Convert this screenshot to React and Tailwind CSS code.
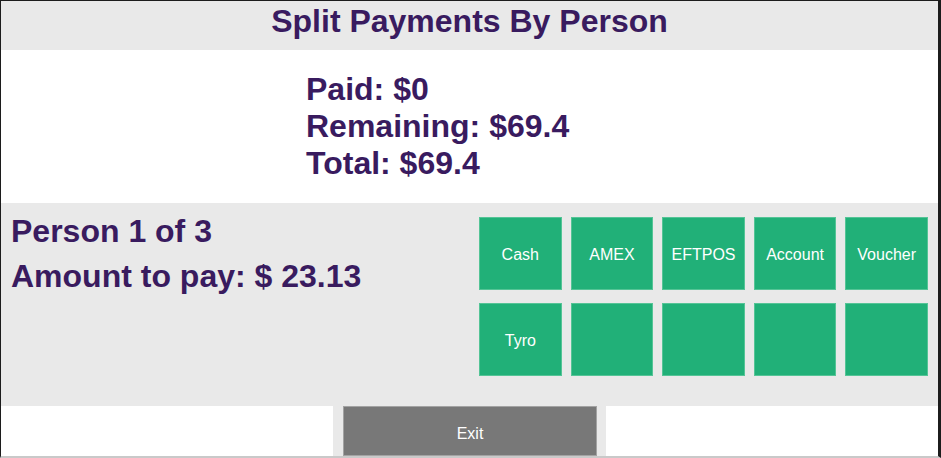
const methods = ['Cash', 'AMEX', 'EFTPOS', 'Account', 'Voucher', 'Tyro', '', '', '', '']

function App() {
  return (
    <div className="w-[941px] h-[458px] bg-white border-l border-t border-r-[3px] border-b-2 border-l-[#1c1c1c] border-t-[#1c1c1c] border-r-[#1c1c1c] border-b-[#c9c9c9] flex flex-col font-['Liberation_Sans',Arial,sans-serif] font-bold text-[#391b5f] overflow-hidden">
      <div className="h-[49px] bg-[#e9e9e9] flex justify-center pt-[2px]">
        <h1 className="text-[32px] leading-[37px]">Split Payments By Person</h1>
      </div>

      <div className="h-[153px] flex flex-col pl-[305px] pt-[21px] text-[32px] leading-[37px]">
        <div>Paid: $0</div>
        <div>Remaining: $69.4</div>
        <div>Total: $69.4</div>
      </div>

      <div className="h-[203px] bg-[#e9e9e9] flex justify-between pl-[10px] pr-[10px]">
        <div className="pt-[10px] text-[32px] leading-[37px]">
          <div>Person 1 of 3</div>
          <div className="mt-[8px]">Amount to pay: $ 23.13</div>
        </div>
        <div className="w-[449px] pt-[14px] grid grid-cols-5 gap-x-[9px] gap-y-[13px] content-start">
          {methods.map((m, i) => (
            <button
              key={i}
              className="h-[73px] bg-[#21b078] border border-[#54c496] text-white font-normal text-[16px] pt-[3px] flex items-center justify-center"
            >
              {m}
            </button>
          ))}
        </div>
      </div>

      <div className="flex-1 flex">
        <div className="w-[332px] bg-white"></div>
        <div className="w-[10px] bg-[#e9e9e9]"></div>
        <button className="w-[254px] bg-[#787878] border border-[#a3a3a3] text-white font-normal text-[16px] pt-[6px] flex items-center justify-center">
          Exit
        </button>
        <div className="w-[9px] bg-[#e9e9e9]"></div>
        <div className="flex-1 bg-white"></div>
      </div>
    </div>
  )
}

export default App
